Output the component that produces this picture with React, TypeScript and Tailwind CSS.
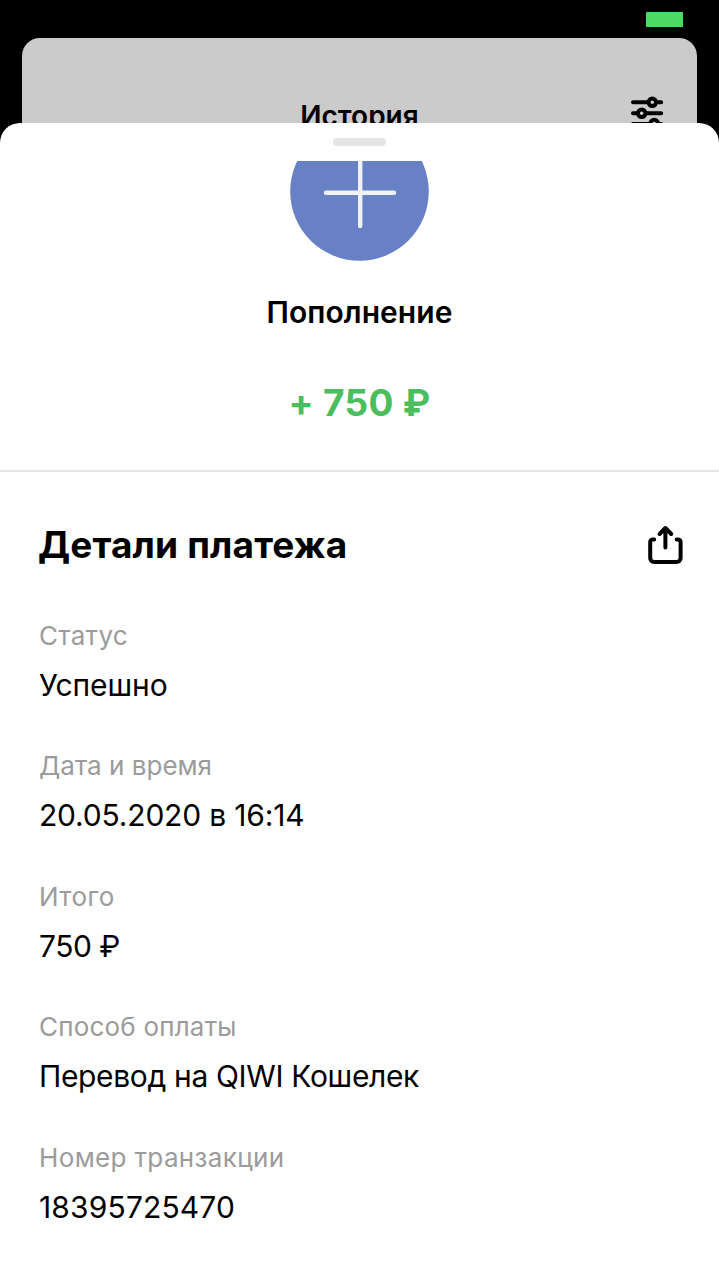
interface Detail {
  label: string;
  value: string;
  labelClass: string;
  valueClass: string;
}

const details: Detail[] = [
  { label: 'Статус', value: 'Успешно', labelClass: 'tracking-[0.3px]', valueClass: 'tracking-[-0.1px]' },
  { label: 'Дата и время', value: '20.05.2020 в 16:14', labelClass: 'tracking-[0.02px]', valueClass: 'tracking-[-0.18px]' },
  { label: 'Итого', value: '750 ₽', labelClass: 'tracking-[0.4px]', valueClass: 'tracking-[-0.5px]' },
  { label: 'Способ оплаты', value: 'Перевод на QIWI Кошелек', labelClass: 'tracking-[0.2px]', valueClass: 'tracking-[-0.35px]' },
  { label: 'Номер транзакции', value: '18395725470', labelClass: 'tracking-[0.36px]', valueClass: 'tracking-[0.15px]' },
];

function FiltersIcon() {
  return (
    <svg width="34" height="36" viewBox="0 0 34 36" fill="none" stroke="black" strokeWidth="4" strokeLinecap="round">
      <path d="M3 6.3H18M26 6.3H31.2" />
      <circle cx="22.3" cy="6.3" r="3.8" />
      <path d="M3 17.3H7.5M16 17.3H31.2" />
      <circle cx="11.7" cy="17.3" r="3.8" />
      <path d="M3 28H20M29 28H31.2" />
      <circle cx="24.2" cy="27.6" r="3.8" />
    </svg>
  );
}

function ShareIcon() {
  return (
    <svg width="36" height="40" viewBox="0 0 36 40" fill="none" stroke="black" strokeWidth="4" strokeLinecap="round" strokeLinejoin="round">
      <path d="M6.2 14.4H5C3.2 14.4 2.2 15.4 2.2 17.2V33C2.2 35.4 3.8 37 6.2 37H28.6C31 37 32.6 35.4 32.6 33V17.2C32.6 15.4 31.6 14.4 29.8 14.4H28.6" />
      <path d="M17.4 22.6V3.2M11.6 9L17.4 3L23.2 9" />
    </svg>
  );
}

function DetailRow({ label, value, labelClass, valueClass }: Detail) {
  return (
    <div className="h-[130.5px]">
      <p className={`text-[26px] leading-9 text-[#9b9b9b] ${labelClass}`}>{label}</p>
      <p className={`mt-[11px] text-[30px] leading-10 text-black ${valueClass}`}>{value}</p>
    </div>
  );
}

export default function App() {
  return (
    <div className="flex h-[1280px] w-full flex-col overflow-hidden bg-black font-['Inter',sans-serif] whitespace-nowrap">
      {/* status bar */}
      <div className="flex h-[38px] shrink-0 justify-end pt-3 pr-9">
        <div className="h-[15px] w-[37px] rounded-[1px] bg-[#4cd964]" />
      </div>

      {/* history screen behind the sheet */}
      <div className="mr-[22px] ml-[22px] grid h-[85px] shrink-0 grid-cols-[1fr_auto_1fr] items-start overflow-hidden rounded-t-[18px] bg-[#cbcbcb]">
        <span />
        <h1 className="mt-[58px] text-[28px] leading-10 font-semibold text-black">История</h1>
        <div className="mt-[58px] mr-[33px] flex justify-end">
          <FiltersIcon />
        </div>
      </div>

      <div className="flex flex-1 flex-col rounded-t-[20px] bg-white">
        <div className="flex h-[38px] shrink-0 justify-center pt-[15px]">
          <div className="h-2 w-[53px] rounded-full bg-[#e5e5e5]" />
        </div>

        <div className="flex h-[311px] shrink-0 flex-col items-center border-b-2 border-[#e5e5e5]">
          <svg width="139" height="100" viewBox="0 0 139 100">
            <circle cx="69.5" cy="30.5" r="69.3" fill="#6880c4" />
            <path d="M36 31.7H104M70.2 -3V65" stroke="#f0f2fa" strokeWidth="4.4" strokeLinecap="round" />
          </svg>
          <h2 className="mt-[31px] text-[30px] leading-10 font-semibold tracking-[0.05px] text-black">Пополнение</h2>
          {/* calt off keeps the plus sign on the lowercase axis */}
          <p className="mt-[47px] text-[37px] leading-[48px] font-bold tracking-[0.3px] text-[#4bbd5c] [font-feature-settings:'calt'_0]">+ 750 ₽</p>
        </div>

        <div className="flex items-start justify-between pt-[49px] pr-[35px] pl-[38px]">
          <h3 className="text-[37px] leading-[48px] font-bold tracking-[0.15px] text-black">Детали платежа</h3>
          <div className="mt-1">
            <ShareIcon />
          </div>
        </div>

        <div className="mt-[48.9px] pl-[39px]">
          {details.map((detail) => (
            <DetailRow key={detail.label} {...detail} />
          ))}
        </div>
      </div>
    </div>
  );
}
